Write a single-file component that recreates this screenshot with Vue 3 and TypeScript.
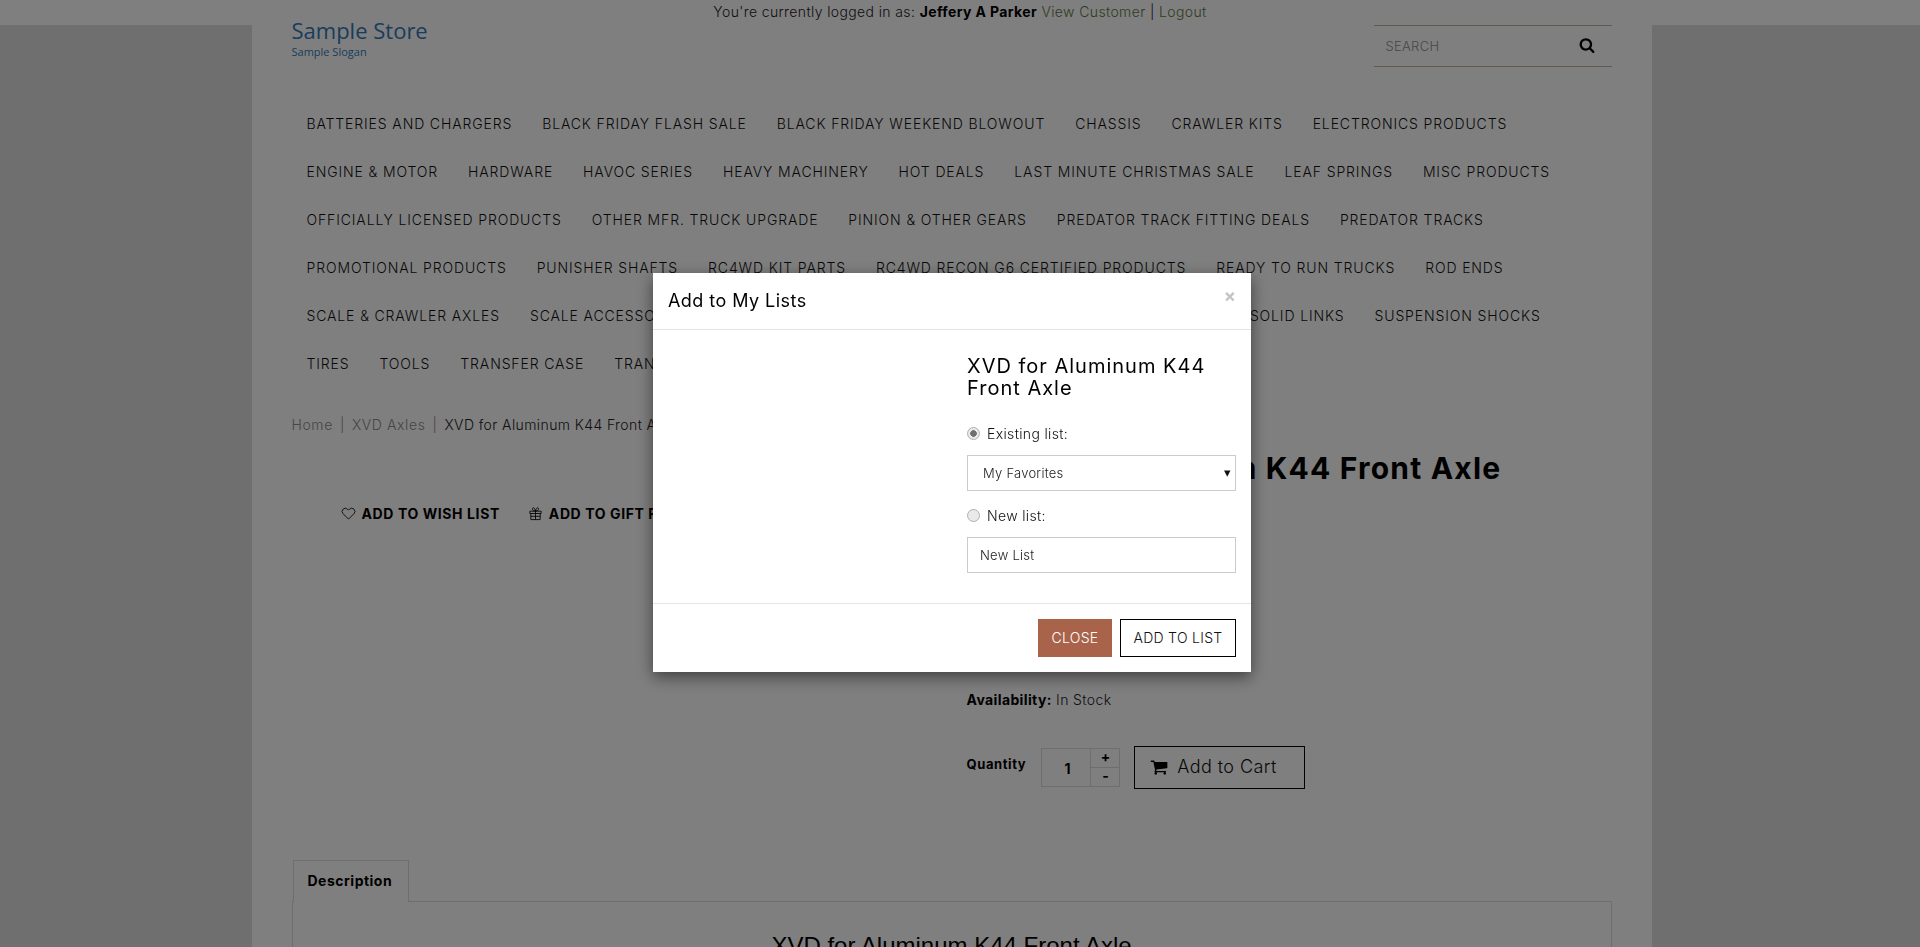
<script setup lang="ts">
import { ref } from 'vue'

const navRows: string[][] = [
  ['Batteries and Chargers', 'Black Friday Flash Sale', 'Black Friday Weekend Blowout', 'Chassis', 'Crawler Kits', 'Electronics Products'],
  ['Engine & Motor', 'Hardware', 'Havoc Series', 'Heavy Machinery', 'Hot Deals', 'Last Minute Christmas Sale', 'Leaf Springs', 'Misc Products'],
  ['Officially Licensed Products', 'Other Mfr. Truck Upgrade', 'Pinion & Other Gears', 'Predator Track Fitting Deals', 'Predator Tracks'],
  ['Promotional Products', 'Punisher Shafts', 'RC4WD Kit Parts', 'RC4WD Recon G6 Certified Products', 'Ready to Run Trucks', 'Rod Ends'],
  ['Scale & Crawler Axles', 'Scale Accessories', 'Scale Wheels', 'Shock Mounts', 'Solid Axles', 'Slippers', 'Solid Links', 'Suspension Shocks'],
  ['Tires', 'Tools', 'Transfer Case', 'Transmissions']
]

const listChoice = ref('existing')
const newListName = ref('New List')
</script>

<template>
  <div class="page">
    <div class="topbar">
      You're currently logged in as: <strong>Jeffery A Parker</strong>{{ ' ' }}<a class="green">View Customer</a> | <a class="green">Logout</a>
    </div>

    <div class="container">
      <header class="site-head">
        <div class="logo">
          <div class="store-name">Sample Store</div>
          <div class="slogan">Sample Slogan</div>
        </div>
        <div class="search">
          <span class="search-label">SEARCH</span>
          <svg class="search-icon" viewBox="0 0 1792 1792"><path d="M1216 832q0-185-131.5-316.5t-316.5-131.5-316.5 131.5-131.5 316.5 131.5 316.5 316.5 131.5 316.5-131.5 131.5-316.5zm512 832q0 52-38 90t-90 38q-54 0-90-38l-343-342q-179 124-399 124-143 0-273.5-55.5t-225-150-150-225-55.5-273.5 55.5-273.5 150-225 225-150 273.5-55.5 273.5 55.5 225 150 150 225 55.5 273.5q0 220-124 399l343 343q37 37 37 90z" /></svg>
        </div>
      </header>

      <nav class="nav">
        <div v-for="(row, i) in navRows" :key="i" class="nav-row">
          <a v-for="item in row" :key="item" class="nav-item">{{ item }}</a>
        </div>
      </nav>

      <div class="crumbs">
        <a>Home</a><span class="sep">|</span><a>XVD Axles</a><span class="sep">|</span><span class="current">XVD for Aluminum K44 Front Axle</span>
      </div>

      <section class="product">
        <div class="gallery">
          <div class="wish-row">
            <a class="wish">
              <svg class="line-icon" viewBox="0 0 16 16"><path d="M8 14 2.2 8.2a3.4 3.4 0 0 1 0-4.8 3.4 3.4 0 0 1 4.8 0L8 4.4l1-1a3.4 3.4 0 0 1 4.8 0 3.4 3.4 0 0 1 0 4.8z" /></svg>
              Add to Wish List
            </a>
            <a class="wish">
              <svg class="line-icon" viewBox="0 0 16 16"><path d="M2 5.500h12v2.500H2zM3 8v6.500h10V8M8 5.500v9M3 11h10M8 5.500C6 5.500 4.500 4.500 4.800 2.500 5.200 1 7.500 2 8 5.500 8.500 2 10.800 1 11.200 2.500 11.500 4.500 10 5.500 8 5.500z" /></svg>
              Add to Gift Registry
            </a>
          </div>
        </div>
        <div class="details">
          <h1 class="product-title">XVD for Aluminum K44 Front Axle</h1>
          <p class="availability"><b>Availability:</b> In Stock</p>
          <div class="buy-row">
            <span class="qty-label">Quantity</span>
            <div class="qty">
              <span class="qty-value">1</span>
              <div class="qty-btns"><span>+</span><span>-</span></div>
            </div>
            <button class="cart-btn" type="button">
              <svg class="cart-icon" viewBox="0 0 1792 1792"><path d="M704 1536q0 52-38 90t-90 38-90-38-38-90 38-90 90-38 90 38 38 90zm896 0q0 52-38 90t-90 38-90-38-38-90 38-90 90-38 90 38 38 90zm128-1088v512q0 24-16.5 43.5t-40.5 22.5l-1044 122q13 60 13 70 0 16-24 64h920q26 0 45 19t19 45-19 45-45 19h-1024q-26 0-45-19t-19-45q0-11 8-31.5t16-36 21.5-40 15.5-29.5l-177-823h-204q-26 0-45-19t-19-45 19-45 45-19h256q16 0 28.5 6.5t19.5 15.5 13 24.5 8 26 5.5 29.5 4.5 26h1201q26 0 45 19t19 45z" /></svg>
              Add to Cart
            </button>
          </div>
        </div>
      </section>

      <section class="tabs">
        <div class="tab-head"><span class="tab">Description</span></div>
        <div class="tab-body">
          <h2 class="desc-title">XVD for Aluminum K44 Front Axle</h2>
        </div>
      </section>
    </div>
  </div>

  <div class="backdrop"></div>

  <div class="modal">
    <div class="modal-head">
      <h4 class="modal-title">Add to My Lists</h4>
      <span class="modal-x">×</span>
    </div>
    <div class="modal-body">
      <div class="modal-form">
        <h3 class="form-title">XVD for Aluminum K44 Front Axle</h3>
        <label class="radio-row">
          <input v-model="listChoice" class="radio" type="radio" value="existing" />
          Existing list:
        </label>
        <div class="select-wrap">
          <select class="field select">
            <option>My Favorites</option>
          </select>
          <span class="select-arrow">▾</span>
        </div>
        <label class="radio-row">
          <input v-model="listChoice" class="radio" type="radio" value="new" />
          New list:
        </label>
        <input v-model="newListName" class="field text-field" type="text" />
      </div>
    </div>
    <div class="modal-foot">
      <button class="btn btn-close" type="button">Close</button>
      <button class="btn btn-add" type="button">Add to List</button>
    </div>
  </div>
</template>

<style>
html,
body {
  margin: 0;
  height: 100%;
  overflow: hidden;
  background: #dedede;
}
</style>

<style scoped>
.page {
  padding-right: 17px;
  font-family: Inter, "Liberation Sans", sans-serif;
  color: #222;
}

.topbar {
  margin-right: -17px;
  height: 25px;
  line-height: 24px;
  background: #fff;
  text-align: center;
  font-size: 14px;
  letter-spacing: 0.38px;
  font-weight: 300;
  color: #222;
}

.topbar strong {
  color: #000;
  font-weight: 700;
}

.green {
  color: #607a42;
}

.container {
  width: 1400px;
  margin: 0 auto;
  padding: 0 40px;
  box-sizing: border-box;
  height: 922px;
  background: #fff;
}

.site-head {
  display: flex;
  justify-content: space-between;
  height: 75px;
}

.logo {
  color: #337ab7;
  font-family: "Open Sans", sans-serif;
}

.store-name {
  font-size: 22px;
  line-height: 12px;
  margin-top: -1px;
  height: 16px;
}

.slogan {
  font-size: 11px;
  line-height: 14px;
  margin-top: 5px;
}

.search {
  display: flex;
  align-items: center;
  justify-content: space-between;
  box-sizing: border-box;
  width: 238px;
  height: 42px;
  padding: 0 18px 0 12px;
  border-top: 1px solid #c4b5a0;
  border-bottom: 1px solid #c4b5a0;
}

.search-label {
  font-size: 13px;
  font-weight: 300;
  letter-spacing: 0.3px;
  color: #8f8f8f;
}

.search-icon {
  width: 16px;
  height: 16px;
  margin-top: -2px;
  margin-right: -1px;
}

.nav {
  padding: 0 15px;
}

.nav-row {
  display: flex;
  align-items: center;
  gap: 30px;
  height: 48px;
  padding-bottom: 1px;
  box-sizing: border-box;
  white-space: nowrap;
}

.nav-item {
  font-size: 14px;
  font-weight: 300;
  letter-spacing: 0.87px;
  text-transform: uppercase;
  color: #111;
}

.crumbs {
  margin-top: 27px;
  height: 20px;
  line-height: 20px;
  font-size: 14px;
  font-weight: 300;
  letter-spacing: 0.6px;
  color: #8c8c8c;
}

.sep {
  margin: 0 7px;
}

.current {
  letter-spacing: 0.4px;
  color: #222;
}

.product {
  display: grid;
  grid-template-columns: 675px 1fr;
  height: 425px;
}

.gallery {
  padding-top: 68px;
}

.wish-row {
  display: flex;
  gap: 28px;
  padding-left: 49px;
}

.wish {
  display: flex;
  align-items: center;
  gap: 6px;
  height: 20px;
  font-size: 14px;
  font-weight: 700;
  letter-spacing: 0.6px;
  text-transform: uppercase;
  color: #000;
  white-space: nowrap;
}

.line-icon {
  width: 15px;
  height: 15px;
  fill: none;
  stroke: #000;
  stroke-width: 0.9;
}

.details {
  padding-top: 15px;
}

.product-title {
  margin: 0;
  font-size: 30px;
  line-height: 36px;
  font-weight: 700;
  letter-spacing: 1.2px;
  color: #000;
  white-space: nowrap;
}

.availability {
  margin: 204px 0 0;
  height: 20px;
  line-height: 20px;
  font-size: 14px;
  font-weight: 300;
  letter-spacing: 0.38px;
  color: #222;
}

.availability b {
  font-weight: 700;
  color: #000;
}

.buy-row {
  display: flex;
  align-items: flex-start;
  margin-top: 36px;
}

.qty-label {
  width: 74px;
  margin-top: 10px;
  font-size: 13px;
  font-weight: 700;
  letter-spacing: 0.6px;
  color: #000;
}

.qty {
  display: flex;
  box-sizing: border-box;
  width: 79px;
  height: 39px;
  margin-top: 2px;
  border: 1px solid #dcdcdc;
}

.qty-value {
  flex: 1;
  padding-left: 4px;
  line-height: 39px;
  text-align: center;
  font-size: 14px;
  font-weight: 700;
  color: #000;
}

.qty-btns {
  display: flex;
  flex-direction: column;
  width: 28px;
  border-left: 1px solid #dcdcdc;
}

.qty-btns span {
  flex: 1;
  padding-left: 2px;
  line-height: 16px;
  text-align: center;
  font-size: 14px;
  font-weight: 700;
  color: #000;
}

.qty-btns span + span {
  border-top: 1px solid #dcdcdc;
}

.cart-btn {
  display: flex;
  align-items: center;
  justify-content: center;
  gap: 9px;
  box-sizing: border-box;
  width: 171px;
  height: 43px;
  margin-left: 14px;
  padding: 0 11px 2px 0;
  background: #fff;
  border: 1px solid #000;
  font: 300 18px Inter, sans-serif;
  letter-spacing: 0.42px;
  color: #111;
}

.cart-icon {
  width: 18px;
  height: 18px;
}

.tabs {
  font-size: 14px;
}

.tab-head {
  display: flex;
  height: 41px;
  border-bottom: 1px solid #ddd;
}

.tab {
  box-sizing: border-box;
  width: 116px;
  height: 42px;
  margin-left: 1px;
  padding-left: 14px;
  line-height: 40px;
  background: #fff;
  border: 1px solid #ddd;
  border-bottom: 0;
  font-size: 14px;
  font-weight: 700;
  letter-spacing: 0.5px;
  color: #000;
}

.tab-body {
  height: 200px;
  border: 1px solid #ddd;
  border-top: 0;
  text-align: center;
}

.desc-title {
  margin: 0;
  padding-top: 30px;
  font-family: "Liberation Sans", sans-serif;
  font-size: 24px;
  line-height: 28px;
  font-weight: 400;
  color: #000;
}

.backdrop {
  position: fixed;
  inset: 0;
  background: rgba(0, 0, 0, 0.5);
}

.modal {
  position: fixed;
  left: 653px;
  top: 273px;
  width: 598px;
  background: #fff;
  box-shadow: 0 5px 15px rgba(0, 0, 0, 0.5);
  font-family: Inter, "Liberation Sans", sans-serif;
  color: #000;
}

.modal-head {
  display: flex;
  align-items: center;
  justify-content: space-between;
  box-sizing: border-box;
  height: 57px;
  padding: 0 15px 1px;
  border-bottom: 1px solid #e5e5e5;
}

.modal-title {
  margin: 0;
  font-size: 18px;
  font-weight: 400;
  letter-spacing: 0.45px;
}

.modal-x {
  margin-top: -10px;
  font-size: 18px;
  font-weight: 700;
  color: #c4c4c4;
}

.modal-body {
  display: flex;
  justify-content: flex-end;
  box-sizing: border-box;
  height: 274px;
  padding: 25px 15px 0;
  border-bottom: 1px solid #e5e5e5;
}

.modal-form {
  width: 269px;
}

.form-title {
  margin: 0 0 24px;
  font-size: 20px;
  line-height: 22px;
  font-weight: 400;
  letter-spacing: 1px;
}

.radio-row {
  display: flex;
  align-items: center;
  gap: 7px;
  height: 20px;
  font-size: 14px;
  font-weight: 300;
  letter-spacing: 0.35px;
  color: #111;
}

.radio {
  appearance: none;
  box-sizing: border-box;
  flex: none;
  width: 13px;
  height: 13px;
  margin: 0;
  background: #e9e9e9;
  border: 1px solid #b0b0b0;
  border-radius: 50%;
}

.radio:checked {
  background: radial-gradient(circle, #6e6e6e 0 3px, #e9e9e9 3.5px);
}

.select-wrap {
  position: relative;
  margin: 12px 0 14px;
}

.field {
  display: block;
  box-sizing: border-box;
  width: 269px;
  height: 36px;
  background: #fff;
  border: 1px solid #ccc;
  border-radius: 0;
  font-family: Inter, sans-serif;
  font-size: 13px;
  font-weight: 300;
  letter-spacing: 0.25px;
  color: #222;
}

.select {
  appearance: none;
  padding-left: 15px;
}

.select-arrow {
  position: absolute;
  right: 5px;
  top: 9px;
  font-size: 13px;
  color: #111;
}

.text-field {
  margin-top: 12px;
  padding-left: 12px;
  outline: none;
}

.modal-foot {
  display: flex;
  justify-content: flex-end;
  gap: 8px;
  padding: 15px;
}

.btn {
  box-sizing: border-box;
  height: 38px;
  padding: 0 0 1px;
  border-radius: 0;
  font: 300 14px Inter, sans-serif;
  letter-spacing: 0.3px;
  text-transform: uppercase;
}

.btn-close {
  width: 74px;
  background: #a9634a;
  border: 0;
  color: #fff;
}

.btn-add {
  width: 116px;
  background: #fff;
  border: 1px solid #000;
  color: #111;
}
</style>
